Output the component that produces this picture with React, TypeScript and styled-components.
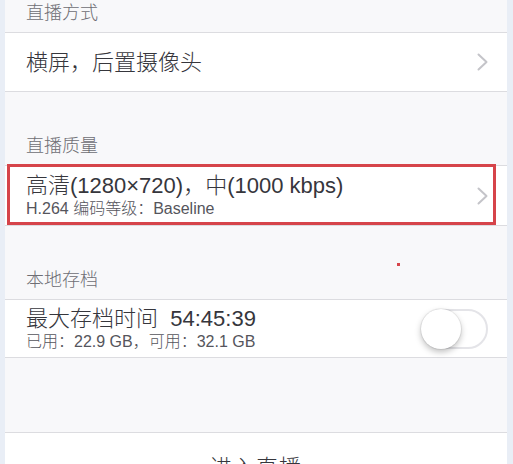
import styled, { createGlobalStyle } from 'styled-components'

const GlobalStyle = createGlobalStyle`
  html, body {
    margin: 0;
    padding: 0;
    background: #e9eef6;
    overflow: hidden;
  }
  body {
    font-family: 'Liberation Sans', 'Noto Sans CJK SC', sans-serif;
    color: #36363c;
  }
`

export default function App() {
  return (
    <>
      <GlobalStyle />
      <Frame>
        <Scroll>
          <SectionHeader>直播方式</SectionHeader>
          <Row>
            <RowTitle>横屏，后置摄像头</RowTitle>
            <Chevron />
          </Row>

          <SectionHeader>直播质量</SectionHeader>
          <Row $height={59}>
            <RowText>
              <RowTitle>高清(1280×720)，中(1000 kbps)</RowTitle>
              <RowSubtitle>H.264 编码等级：Baseline</RowSubtitle>
            </RowText>
            <Chevron />
            <Highlight />
          </Row>

          <SectionHeader>
            本地存档
            <Marker />
          </SectionHeader>
          <Row $height={57}>
            <RowText>
              <RowTitle>最大存档时间&nbsp;&nbsp;54:45:39</RowTitle>
              <RowSubtitle>已用：22.9 GB，可用：32.1 GB</RowSubtitle>
            </RowText>
            <Switch>
              <Knob />
            </Switch>
          </Row>

          <Spacer />
          <EnterButton>进入直播</EnterButton>
        </Scroll>
      </Frame>
    </>
  )
}

function Chevron() {
  return (
    <ChevronIcon width="12" height="18" viewBox="0 0 12 18" fill="none">
      <path d="M1.5 1.5 L9.5 9 L1.5 16.5" stroke="#c4c4c9" strokeWidth="2" strokeLinecap="round" strokeLinejoin="round" />
    </ChevronIcon>
  )
}

const Frame = styled.div`
  margin: 0 6px 0 5px;
  height: 464px;
  background: #f8f8fa;
  overflow: hidden;
`

const Scroll = styled.div`
  margin-top: -41px;
  display: flex;
  flex-direction: column;
`

const SectionHeader = styled.div`
  position: relative;
  height: 74px;
  box-sizing: border-box;
  padding: 0 21px 9px;
  display: flex;
  align-items: flex-end;
  font-size: 18px;
  font-weight: 300;
  line-height: 20px;
  color: #6e6e74;
  border-bottom: 1px solid #dcdce0;
`

const Row = styled.div<{ $height?: number }>`
  position: relative;
  height: ${({ $height }) => $height ?? 58}px;
  padding: 0 18px 0 21px;
  display: flex;
  align-items: center;
  justify-content: space-between;
  background: #fff;
  border-bottom: 1px solid #dcdce0;
`

const RowText = styled.div`
  display: flex;
  flex-direction: column;
  gap: 1px;
`

const RowTitle = styled.div`
  font-size: 22px;
  font-weight: 300;
  line-height: 25px;
  color: #36363c;
  white-space: nowrap;
`

const RowSubtitle = styled.div`
  font-size: 16px;
  font-weight: 300;
  line-height: 19px;
  color: #55555c;
  white-space: nowrap;
`

const ChevronIcon = styled.svg`
  flex-shrink: 0;
`

const Highlight = styled.div`
  position: absolute;
  left: 2px;
  right: 11px;
  top: -2px;
  bottom: 0;
  border: 3px solid #d6444a;
  pointer-events: none;
`

const Marker = styled.span`
  position: absolute;
  left: 392px;
  top: 37px;
  width: 3px;
  height: 3px;
  background: #d6444a;
`

const Switch = styled.div`
  width: 67px;
  height: 40px;
  box-sizing: border-box;
  border: 2px solid #e4e4e8;
  border-radius: 20px;
  background: #fff;
  position: relative;
  margin-right: 1px;
`

const Knob = styled.div`
  position: absolute;
  left: -2px;
  top: -2px;
  width: 40px;
  height: 40px;
  border-radius: 50%;
  background: #fff;
  box-shadow: 0 3px 6px rgba(0, 0, 0, 0.25), 0 0 0 1px rgba(0, 0, 0, 0.06);
`

const Spacer = styled.div`
  height: 75px;
  border-bottom: 1px solid #dcdce0;
  box-sizing: border-box;
`

const EnterButton = styled.div`
  background: #fff;
  height: 60px;
  padding-top: 16px;
  box-sizing: border-box;
  text-align: center;
  font-size: 22px;
  font-weight: 300;
  letter-spacing: 1px;
  color: #36363c;
`
